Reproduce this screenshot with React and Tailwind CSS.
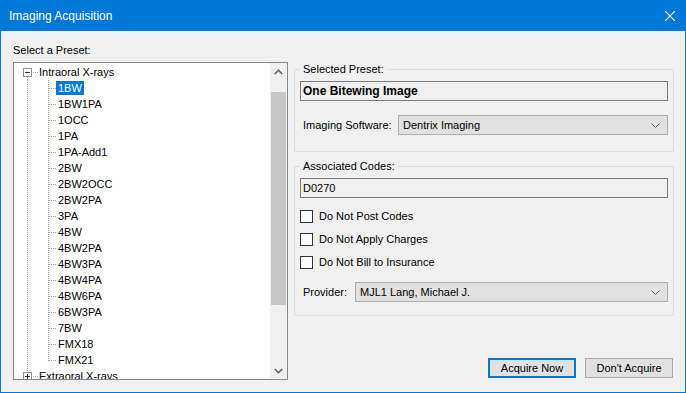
import React from "react";

const children = [
  "1BW",
  "1BW1PA",
  "1OCC",
  "1PA",
  "1PA-Add1",
  "2BW",
  "2BW2OCC",
  "2BW2PA",
  "3PA",
  "4BW",
  "4BW2PA",
  "4BW3PA",
  "4BW4PA",
  "4BW6PA",
  "6BW3PA",
  "7BW",
  "FMX18",
  "FMX21",
];

const DOT = "#a0a0a0";

function RootGutter({ open, hasBelow, hasAbove }) {
  return (
    <svg width="24" height="16" className="shrink-0" shapeRendering="crispEdges">
      {hasAbove && <line x1="13.5" y1="0" x2="13.5" y2="4" stroke={DOT} strokeDasharray="1 1" />}
      {hasBelow && <line x1="13.5" y1="13" x2="13.5" y2="16" stroke={DOT} strokeDasharray="1 1" />}
      <rect x="9.5" y="4.5" width="8" height="8" fill="#fff" stroke="#919191" />
      <line x1="11" y1="8.5" x2="16" y2="8.5" stroke="#333" />
      {!open && <line x1="13.5" y1="6" x2="13.5" y2="11" stroke="#333" />}
      <line x1="19" y1="8.5" x2="24" y2="8.5" stroke={DOT} strokeDasharray="1 1" />
    </svg>
  );
}

function ChildGutter({ last }) {
  return (
    <svg width="42" height="16" className="shrink-0" shapeRendering="crispEdges">
      <line x1="13.5" y1="0" x2="13.5" y2="16" stroke={DOT} strokeDasharray="1 1" />
      <line x1="34.5" y1="0" x2="34.5" y2={last ? 9 : 16} stroke={DOT} strokeDasharray="1 1" />
      <line x1="35" y1="8.5" x2="42" y2="8.5" stroke={DOT} strokeDasharray="1 1" />
    </svg>
  );
}

function Chevron() {
  return (
    <svg width="9" height="5" viewBox="0 0 9 5">
      <polyline points="0.5,0.5 4.5,4.5 8.5,0.5" fill="none" stroke="#606060" strokeWidth="1" />
    </svg>
  );
}

function Combo({ value, width }) {
  return (
    <div className={`${width} h-[20px] bg-[#E1E1E1] border border-[#ADADAD] flex items-center justify-between pl-[4px] pr-[7px]`}>
      <span className="leading-[14px]">{value}</span>
      <Chevron />
    </div>
  );
}

function Check({ label }) {
  return (
    <div className="flex items-center h-[13px]">
      <div className="w-[13px] h-[13px] border border-[#333333] bg-white shrink-0" />
      <span className="ml-[6px] leading-[13px]">{label}</span>
    </div>
  );
}

export default function App() {
  return (
    <div className="w-[686px] h-[393px] bg-[#0078D7] flex flex-col font-['Liberation_Sans',Arial,sans-serif] text-[11px] text-black overflow-hidden">
      {/* Title bar */}
      <div className="h-[31px] flex items-center justify-between pl-[9px] pr-[11px] text-white shrink-0">
        <span className="text-[12px] leading-[14px]">Imaging Acquisition</span>
        <svg width="10" height="10" viewBox="0 0 10 10">
          <line x1="0" y1="0" x2="10" y2="10" stroke="#fff" strokeWidth="1.1" />
          <line x1="10" y1="0" x2="0" y2="10" stroke="#fff" strokeWidth="1.1" />
        </svg>
      </div>

      {/* Body */}
      <div className="flex-1 mx-[1px] mb-[1px] bg-[#F0F0F0] flex">
        {/* Left column */}
        <div className="pl-[12px] pt-[12px] flex flex-col">
          <span className="leading-[14px]">Select a Preset:</span>
          <div className="mt-[5px] w-[275px] h-[318px] border border-[#828790] bg-white flex">
            <div className="flex-1 overflow-hidden pt-[1px]">
              <div className="flex items-center h-[16px]">
                <RootGutter open hasBelow />
                <span className="pl-[1px] leading-[14px] whitespace-nowrap">Intraoral X-rays</span>
              </div>
              {children.map((c, i) => (
                <div key={c} className="flex items-center h-[16px]">
                  <ChildGutter last={i === children.length - 1} />
                  <span
                    className={
                      i === 0
                        ? "px-[2px] leading-[14px] bg-[#0078D7] text-white whitespace-nowrap"
                        : "px-[2px] leading-[14px] whitespace-nowrap"
                    }
                  >
                    {c}
                  </span>
                </div>
              ))}
              <div className="flex items-center h-[16px]">
                <RootGutter open={false} hasAbove />
                <span className="pl-[1px] leading-[14px] whitespace-nowrap">Extraoral X-rays</span>
              </div>
            </div>
            {/* Scrollbar */}
            <div className="w-[17px] bg-[#F0F0F0] flex flex-col shrink-0">
              <div className="h-[17px] flex items-center justify-center">
                <svg width="9" height="6" viewBox="0 0 9 6">
                  <polyline points="0.8,5 4.5,1.3 8.2,5" fill="none" stroke="#606060" strokeWidth="1.6" />
                </svg>
              </div>
              <div className="flex-1 pt-[12px]">
                <div className="h-[213px] mx-[1px] bg-[#C8C8C8]" />
              </div>
              <div className="h-[17px] flex items-center justify-center">
                <svg width="9" height="6" viewBox="0 0 9 6">
                  <polyline points="0.8,1 4.5,4.7 8.2,1" fill="none" stroke="#606060" strokeWidth="1.6" />
                </svg>
              </div>
            </div>
          </div>
        </div>

        {/* Right column */}
        <div className="pl-[6px] pt-[31px] flex flex-col w-[386px]">
          <fieldset className="w-[380px] border border-[#DCDCDC] px-[5px] pb-[16px]">
            <legend className="px-[3px] leading-[15px]">Selected Preset:</legend>
            <div className="mt-[4px] h-[20px] border border-[#7A7A7A] bg-[#F0F0F0] flex items-center pl-[2px]">
              <span className="text-[12px] font-bold leading-[14px]">One Bitewing Image</span>
            </div>
            <div className="mt-[14px] flex items-center">
              <span className="w-[98px] pl-[3px] leading-[14px]">Imaging Software:</span>
              <Combo value="Dentrix Imaging" width="flex-1" />
            </div>
          </fieldset>

          <fieldset className="mt-[7px] w-[380px] border border-[#DCDCDC] px-[5px] pb-[13px]">
            <legend className="px-[3px] leading-[15px]">Associated Codes:</legend>
            <div className="mt-[4px] h-[20px] border border-[#7A7A7A] bg-[#F0F0F0] flex items-center pl-[2px]">
              <span className="leading-[14px]">D0270</span>
            </div>
            <div className="mt-[12px] flex flex-col gap-[10px]">
              <Check label="Do Not Post Codes" />
              <Check label="Do Not Apply Charges" />
              <Check label="Do Not Bill to Insurance" />
            </div>
            <div className="mt-[13px] flex items-center">
              <span className="w-[55px] pl-[3px] leading-[14px]">Provider:</span>
              <Combo value="MJL1 Lang, Michael J." width="flex-1" />
            </div>
          </fieldset>

          <div className="mt-[42px] flex justify-end gap-[9px] w-[379px]">
            <button className="w-[88px] h-[20px] border-2 border-[#0078D7] bg-[#E1E1E1] flex items-center justify-center leading-[14px]">
              Acquire Now
            </button>
            <button className="w-[88px] h-[20px] border border-[#ADADAD] bg-[#E1E1E1] flex items-center justify-center leading-[14px]">
              Don't Acquire
            </button>
          </div>
        </div>
      </div>
    </div>
  );
}
